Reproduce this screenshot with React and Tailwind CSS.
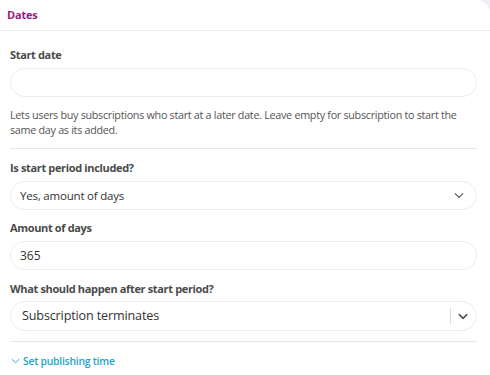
const font = { fontFamily: "'Open Sans', 'Noto Sans', sans-serif" };

function Label({ children, className = "" }) {
  return (
    <div className={`text-[11px] leading-[16px] font-bold tracking-[-0.35px] text-[#4a4a4a] ${className}`}>
      {children}
    </div>
  );
}

function Chevron({ className = "", strokeWidth = 1.6 }) {
  return (
    <svg className={className} viewBox="0 0 12 8" fill="none" stroke="currentColor" strokeWidth={strokeWidth} strokeLinecap="round" strokeLinejoin="round">
      <path d="M1.5 1.8 6 6.2l4.5-4.4" />
    </svg>
  );
}

export default function App() {
  return (
    <div className="min-h-screen bg-[#eef0f3]" style={font}>
      <div className="bg-white rounded-tr-[14px] min-h-[375px]">
        {/* header */}
        <div className="h-[31px] border-b border-[#efefef] flex items-center px-[7px]">
          <span className="text-[11px] font-bold tracking-[-0.2px] text-[#9b1b7e]">Dates</span>
        </div>

        <div className="pl-[10px] pr-[13px]">
          <Label className="pt-[16px] mb-[5px]">Start date</Label>
          <div className="h-[29px] rounded-full border border-[#ececec] bg-white" />
          <p className="mt-[10px] text-[10.8px] leading-[15px] tracking-[-0.3px] text-[#555]">
            Lets users buy subscriptions who start at a later date. Leave empty for subscription to start the same day as its added.
          </p>
          <div className="mt-[11px] border-t border-[#e6e6e6]" />

          <Label className="mt-[11px] mb-[5px]">Is start period included?</Label>
          <div className="h-[29px] rounded-full border border-[#ececec] flex items-center pl-[9px] pr-[12px]">
            <span className="flex-1 text-[11.5px] tracking-[-0.2px] text-[#333]">Yes, amount of days</span>
            <Chevron className="w-[10px] h-[7px] text-[#555]" strokeWidth={1.4} />
          </div>

          <Label className="mt-[10px] mb-[5px]">Amount of days</Label>
          <div className="h-[29px] rounded-full border border-[#ececec] flex items-center pl-[9px]">
            <span className="text-[12px] text-[#333]">365</span>
          </div>

          <Label className="mt-[11px] mb-[4px]">What should happen after start period?</Label>
          <div className="h-[30px] rounded-full border border-[#ececec] flex items-center pl-[11px] pr-[8px]">
            <span className="flex-1 text-[12.6px] tracking-[-0.15px] text-[#333]">Subscription terminates</span>
            <div className="h-[16px] border-l border-[#d9d9d9] mr-[7px]" />
            <Chevron className="w-[10px] h-[7px] text-[#555]" strokeWidth={2} />
          </div>
          <div className="mt-[10px] border-t border-[#e6e6e6]" />

          <div className="mt-[11px] flex items-center gap-[3px] text-[#1ea5cd]">
            <Chevron className="w-[9px] h-[6px] ml-[1px]" strokeWidth={1.2} />
            <span className="text-[10.4px] leading-[16px] font-semibold tracking-[-0.25px]">Set publishing time</span>
          </div>
        </div>
      </div>
    </div>
  );
}
